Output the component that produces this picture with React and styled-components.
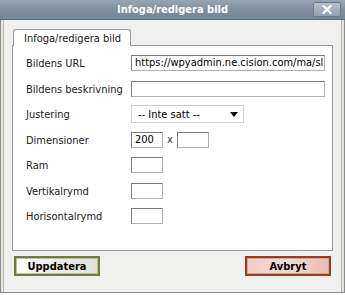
import { Fragment } from "react"
import styled, { createGlobalStyle } from "styled-components"

const Global = createGlobalStyle`
  html, body {
    margin: 0;
    padding: 0;
    background: #ffffff;
  }
  body {
    width: 345px;
    height: 295px;
    overflow: hidden;
    font-family: Tahoma, "DejaVu Sans Condensed", "Liberation Sans", sans-serif;
    font-size: 11px;
  }
`

const Ventana = styled.div`
  width: 345px;
  height: 293px;
  box-sizing: border-box;
  display: flex;
  flex-direction: column;
  background: #f0f0ee;
  border-left: 1px solid #8a8a86;
  border-right: 1px solid #8a8a86;
  border-bottom: 1px solid #8a8a86;
  box-shadow: inset 2px 0 0 #e4e2dc, inset -2px 0 0 #e4e2dc, inset 3px 0 0 #b8b6ae, inset -3px 0 0 #b8b6ae;
`

const Titulo = styled.div`
  position: relative;
  height: 20px;
  flex: none;
  display: flex;
  align-items: center;
  justify-content: center;
  margin: 0 -1px;
  background: linear-gradient(#97a6b5, #7e8fa0 50%, #738597);
  border-bottom: 1px solid #5f6f7f;
  color: #ffffff;
  font-weight: bold;
  font-size: 11px;
  box-sizing: border-box;
`

const Cerrar = styled.div`
  position: absolute;
  right: 4px;
  top: 2px;
  width: 28px;
  height: 15px;
  box-sizing: border-box;
  border: 1px solid #6b7b8b;
  border-radius: 2px;
  background: linear-gradient(#b4bfca, #94a2b0);
  display: flex;
  align-items: center;
  justify-content: center;
`

const Contenido = styled.div`
  flex: 1;
  display: flex;
  flex-direction: column;
  padding: 9px 11px 0 11px;
`

const Pestana = styled.div`
  align-self: flex-start;
  margin-left: 1px;
  height: 16px;
  padding: 0 9px 0 10px;
  display: flex;
  align-items: center;
  background: #ffffff;
  border: 1px solid #919b9c;
  border-bottom: none;
  border-radius: 3px 3px 0 0;
  color: #1a1a1a;
  position: relative;
  z-index: 1;
  margin-bottom: -1px;
`

const Panel = styled.div`
  height: 206px;
  box-sizing: border-box;
  background: #ffffff;
  border: 1px solid #919b9c;
  padding: 9px 0 0 13px;
  display: grid;
  grid-template-columns: 105px 1fr;
  grid-auto-rows: 25.5px;
  align-items: start;
`

const Etiqueta = styled.label`
  color: #1a1a1a;
  line-height: 15px;
  padding-top: 1px;
`

const Campo = styled.div`
  display: flex;
  align-items: center;
  gap: 4px;
  color: #333;
`

const Entrada = styled.div`
  box-sizing: border-box;
  width: ${p => p.$ancho}px;
  height: 16px;
  border: 1px solid #7b7b7b;
  border-right-color: #b0b0b0;
  border-bottom-color: #b0b0b0;
  background: #fff;
  padding: 0 3px;
  line-height: 14px;
  white-space: nowrap;
  overflow: hidden;
  color: #000;
`

const Selector = styled.div`
  box-sizing: border-box;
  width: 113px;
  height: 18px;
  margin-top: -1px;
  border: 1px solid #d0d0d0;
  background: #fff;
  display: flex;
  align-items: center;
  justify-content: space-between;
  padding: 0 5px 0 6px;
  color: #000;
`

const Flecha = styled.span`
  width: 0;
  height: 0;
  border-left: 4px solid transparent;
  border-right: 4px solid transparent;
  border-top: 5px solid #000;
  margin-top: 1px;
`

const Botones = styled.div`
  display: flex;
  justify-content: space-between;
  padding: 5px 2px 0 2px;
`

const Boton = styled.div`
  box-sizing: border-box;
  width: 86px;
  height: 20px;
  display: flex;
  align-items: center;
  justify-content: center;
  font-weight: bold;
  color: #000;
  border: 2px solid ${p => p.$borde};
  box-shadow: inset 0 0 0 1px ${p => p.$interior};
  background: ${p => p.$fondo};
`

const filas = [
  { etiqueta: "Bildens URL", ancho: 194, valor: "https://wpyadmin.ne.cision.com/ma/sl" },
  { etiqueta: "Bildens beskrivning", ancho: 194, valor: "" },
]

const pequenas = ["Ram", "Vertikalrymd", "Horisontalrymd"]

const App = () => {
  return <>
    <Global />
    <Ventana>
      <Titulo>
        Infoga/redigera bild
        <Cerrar>
          <svg width="10" height="9" viewBox="0 0 10 9">
            <path d="M1.5 1 L8.5 8 M8.5 1 L1.5 8" stroke="#fff" strokeWidth="2.2" strokeLinecap="square" />
          </svg>
        </Cerrar>
      </Titulo>
      <Contenido>
        <Pestana>Infoga/redigera bild</Pestana>
        <Panel>
          {filas.map(f => <Fragment key={f.etiqueta}>
            <Etiqueta>{f.etiqueta}</Etiqueta>
            <Campo><Entrada $ancho={f.ancho}>{f.valor}</Entrada></Campo>
          </Fragment>)}
          <Etiqueta>Justering</Etiqueta>
          <Campo>
            <Selector>-- Inte satt -- <Flecha /></Selector>
          </Campo>
          <Etiqueta>Dimensioner</Etiqueta>
          <Campo>
            <Entrada $ancho={32}>200</Entrada>
            x
            <Entrada $ancho={32}></Entrada>
          </Campo>
          {pequenas.map(p => <Fragment key={p}>
            <Etiqueta>{p}</Etiqueta>
            <Campo><Entrada $ancho={32}></Entrada></Campo>
          </Fragment>)}
        </Panel>
        <Botones>
          <Boton $borde="#6e7c3c" $interior="#b9c296" $fondo="linear-gradient(90deg, #ffffff, #f0efea 40%, #e2e1d9)">Uppdatera</Boton>
          <Boton $borde="#9b3b22" $interior="#d8a497" $fondo="linear-gradient(90deg, #f0cfc8, #f3dad4 50%, #e6bdb4)">Avbryt</Boton>
        </Botones>
      </Contenido>
    </Ventana>
  </>
}

export default App
